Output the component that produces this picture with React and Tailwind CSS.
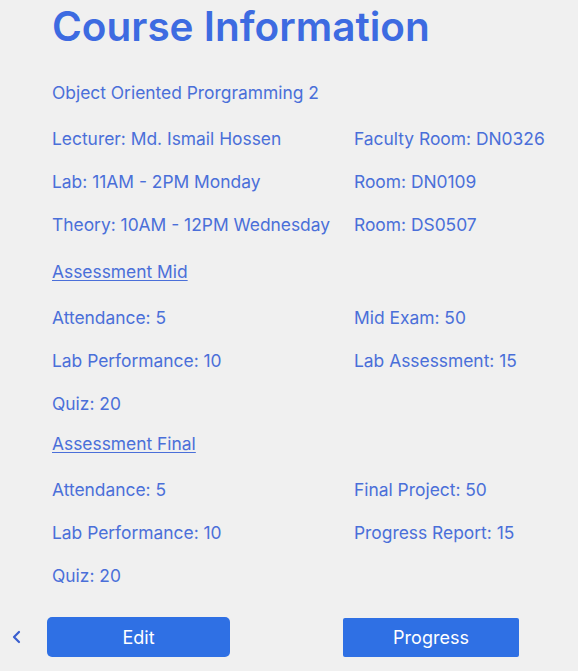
import React from "react";

const rows1 = [
  ["Lecturer: Md. Ismail Hossen", "Faculty Room: DN0326"],
  ["Lab: 11AM - 2PM Monday", "Room: DN0109"],
  ["Theory: 10AM - 12PM Wednesday", "Room: DS0507"],
];

const mid = [
  ["Attendance: 5", "Mid Exam: 50"],
  ["Lab Performance: 10", "Lab Assessment: 15"],
  ["Quiz: 20", ""],
];

const fin = [
  ["Attendance: 5", "Final Project: 50"],
  ["Lab Performance: 10", "Progress Report: 15"],
  ["Quiz: 20", ""],
];

function Row({ left, right, first, top }) {
  return (
    <div
      className={`flex h-6 items-center ${first ? top : "mt-[19px]"}`}
    >
      <div className="w-[302px] shrink-0 whitespace-nowrap">{left}</div>
      <div className="whitespace-nowrap">{right}</div>
    </div>
  );
}

export default function App() {
  return (
    <div
      className="min-h-[671px] w-[578px] bg-[#f0f0f0] text-[#4a6fd9] text-[17.4px]"
      style={{ fontFamily: "Inter, 'Noto Sans', sans-serif" }}
    >
      <div className="pl-[52px]">
        <h1 className="h-[54px] flex items-center text-[40.5px] font-semibold text-[#3d6be1]">
          Course Information
        </h1>

        <div className="mt-[27px] h-6 flex items-center">
          Object Oriented Prorgramming 2
        </div>

        {rows1.map((r, i) => (
          <Row key={i} left={r[0]} right={r[1]} first={i === 0} top="mt-[22px]" />
        ))}

        <div className="mt-[23px] h-6 flex items-center underline underline-offset-2">
          Assessment Mid
        </div>

        {mid.map((r, i) => (
          <Row key={i} left={r[0]} right={r[1]} first={i === 0} top="mt-[22px]" />
        ))}

        <div className="mt-[16px] h-6 flex items-center underline underline-offset-2">
          Assessment Final
        </div>

        {fin.map((r, i) => (
          <Row key={i} left={r[0]} right={r[1]} first={i === 0} top="mt-[22px]" />
        ))}
      </div>

      {/* Buttons */}
      <div className="mt-[29px] flex items-start pb-[14px]">
        <div className="w-[47px] h-10 flex items-center pl-[11px]">
          <svg width="12" height="14" viewBox="0 0 12 14" fill="none">
            <path
              d="M8 2 L3 7 L8 12"
              stroke="#3a5fcf"
              strokeWidth="2.2"
              strokeLinecap="round"
              strokeLinejoin="round"
            />
          </svg>
        </div>
        <button className="w-[183px] h-10 rounded-[5px] bg-[#2f70e4] text-white text-[18px]">
          Edit
        </button>
        <button className="ml-[113px] mt-px w-[176px] h-[39px] rounded-[2px] bg-[#2f70e4] text-white text-[18px]">
          Progress
        </button>
      </div>
    </div>
  );
}
